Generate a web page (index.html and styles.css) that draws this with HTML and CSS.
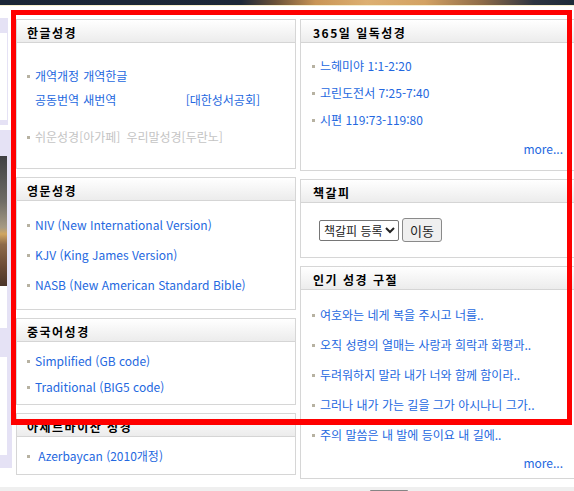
FILE: index.html
```html
<!DOCTYPE html>
<html lang="ko">
<head>
    <meta charset="UTF-8">
    <meta name="viewport" content="width=device-width, initial-scale=1.0">
    <title>성경 읽기</title>
    <link rel="stylesheet" href="styles.css">
</head>
<body>
    <div class="topbar"></div>

    <div class="layout">
        <!-- left menu, only its edge is on screen -->
        <div class="side">
            <div class="side-box side-top"><div class="side-inner"></div></div>
            <div class="side-box side-main">
                <div class="side-photo"></div>
                <div class="side-inner side-short"></div>
                <div class="side-inner side-long"></div>
            </div>
        </div>

        <div class="content">
            <div class="col">
                <div class="panel">
                    <h2 class="panel-title">한글성경</h2>
                    <ul class="list list-korean">
                        <li>
                            <div>
                                <div class="line"><a href="#">개역개정</a><a href="#">개역한글</a></div>
                                <div class="line"><a href="#">공동번역</a><a href="#">새번역</a><a href="#" class="publisher">[대한성서공회]</a></div>
                            </div>
                        </li>
                        <li class="muted">
                            <div class="line"><a href="#">쉬운성경[아가페]</a><a href="#">우리말성경[두란노]</a></div>
                        </li>
                    </ul>
                </div>

                <div class="panel">
                    <h2 class="panel-title">영문성경</h2>
                    <ul class="list list-english">
                        <li><a href="#">NIV (New International Version)</a></li>
                        <li><a href="#">KJV (King James Version)</a></li>
                        <li><a href="#">NASB (New American Standard Bible)</a></li>
                    </ul>
                </div>

                <div class="panel">
                    <h2 class="panel-title">중국어성경</h2>
                    <ul class="list list-short">
                        <li><a href="#">Simplified (GB code)</a></li>
                        <li><a href="#">Traditional (BIG5 code)</a></li>
                    </ul>
                </div>

                <div class="panel">
                    <h2 class="panel-title">아제르바이잔 성경</h2>
                    <ul class="list list-short list-last">
                        <li><a href="#">&nbsp;Azerbaycan (2010개정)</a></li>
                    </ul>
                </div>
            </div>

            <div class="col col-right">
                <div class="panel">
                    <h2 class="panel-title">365일 일독성경</h2>
                    <ul class="list list-daily">
                        <li><a href="#">느헤미야 1:1-2:20</a></li>
                        <li><a href="#">고린도전서 7:25-7:40</a></li>
                        <li><a href="#">시편 119:73-119:80</a></li>
                    </ul>
                    <a href="#" class="more more-daily">more...</a>
                </div>

                <div class="panel">
                    <h2 class="panel-title">책갈피</h2>
                    <form class="bookmark" onsubmit="return false">
                        <select class="bookmark-select">
                            <option>책갈피 등록</option>
                        </select>
                        <button type="submit" class="bookmark-go">이동</button>
                    </form>
                </div>

                <div class="panel">
                    <h2 class="panel-title">인기 성경 구절</h2>
                    <ul class="list list-verses">
                        <li><a href="#">여호와는 네게 복을 주시고 너를..</a></li>
                        <li><a href="#">오직 성령의 열매는 사랑과 희락과 화평과..</a></li>
                        <li><a href="#">두려워하지 말라 내가 너와 함께 함이라..</a></li>
                        <li><a href="#">그러나 내가 가는 길을 그가 아시나니 그가..</a></li>
                        <li><a href="#">주의 말씀은 내 발에 등이요 내 길에..</a></li>
                    </ul>
                    <a href="#" class="more more-verses">more...</a>
                </div>
            </div>
        </div>
    </div>

    <div class="footer"><div class="footer-thumb"></div></div>

    <div class="highlight"></div>
</body>
</html>
```

FILE: styles.css
```css
* {
    box-sizing: border-box;
    margin: 0;
    padding: 0;
}

body {
    background: #fff;
    font-family: "Noto Sans CJK KR", sans-serif;
    overflow: hidden;
    position: relative;
}

a {
    color: #2468e0;
    text-decoration: none;
}

.topbar {
    height: 6px;
    border-bottom: 1px solid #f5efcc;
    background: linear-gradient(to right, #1b2636 0%, #1d2838 42%, #6b5238 48%, #c99556 55%, #ddb072 64%, #d3a263 74%, #8d6b48 84%, #2d3440 93%, #1e2a39 100%);
}

.layout {
    display: flex;
    padding-top: 12px;
}

/* sidebar edge */
.side {
    width: 12px;
    flex: none;
}

.side-box {
    background: #e5e2f5;
}

.side-top {
    width: 8px;
    height: 107px;
    padding: 15px 1px 5px 0;
}

.side-main {
    width: 12px;
    margin-top: 5px;
    padding: 26px 5px 13px 0;
}

.side-inner {
    background: #fff;
    height: 100%;
}

.side-photo {
    height: 130px;
    background: linear-gradient(to bottom, #3f4042 0%, #6f6c66 35%, #a69a83 55%, #d0a560 60%, #8e6a4a 68%, #6b4a35 85%, #4a3428 100%);
}

.side-short {
    height: 42px;
}

.side-long {
    height: 98px;
    margin-top: 29px;
}

/* two columns of boxes */
.content {
    display: flex;
    gap: 4px;
    margin-left: 4px;
    margin-top: 1px;
}

.col {
    width: 280px;
    flex: none;
}

.panel {
    border: 1px solid #d6d6d6;
    margin-bottom: 8px;
}

.panel-title {
    height: 23px;
    line-height: 25px;
    padding-left: 10px;
    border-bottom: 1px solid #d5d5d5;
    background: linear-gradient(to bottom, #ffffff, #ececec);
    color: #000;
    font-size: 12px;
    font-weight: bold;
    letter-spacing: 1.5px;
}

.col-right .panel-title {
    padding-left: 12px;
}

.list {
    list-style: none;
    padding-left: 10px;
    --lh: 26px;
}

.col-right .list {
    padding-left: 11px;
}

.list li {
    display: flex;
    align-items: flex-start;
    line-height: var(--lh);
    font-size: 12px;
}

.list li::before {
    content: "";
    flex: none;
    width: 3px;
    height: 3px;
    margin: calc(var(--lh) / 2 - 1px) 5px 0 0;
    background: #b7b2a2;
}

.list-korean {
    --lh: 24px;
    padding-top: 21px;
    padding-bottom: 19px;
}

.list-korean .line {
    display: flex;
    width: 229px;
}

.list-korean .line a {
    margin-right: 4px;
}

.list-korean .publisher {
    margin-left: auto;
    margin-right: 0;
}

.list-korean .muted {
    margin-top: 13px;
}

.list-korean .muted .line a {
    color: #c4c4c4;
    margin-right: 6px;
}

.list-english {
    --lh: 30px;
    padding-top: 9px;
    padding-bottom: 9px;
}

.list-short {
    padding-top: 6px;
    padding-bottom: 4px;
}

.list-last {
    padding-bottom: 5px;
}

.list-daily {
    --lh: 27px;
    padding-top: 9px;
}

.list-verses {
    --lh: 30px;
    padding-top: 10px;
}

.more {
    display: block;
    text-align: right;
    padding-right: 16px;
    line-height: 20px;
    font-size: 12px;
}

.more-daily {
    margin-top: 6px;
    margin-bottom: 11px;
}

.more-verses {
    margin-top: 3px;
    margin-bottom: 5px;
}

.bookmark {
    display: flex;
    align-items: center;
    gap: 3px;
    padding: 15px 18px;
}

.bookmark-select {
    width: 80px;
    height: 21px;
    font-family: "Noto Sans CJK KR", sans-serif;
    font-size: 12px;
    color: #222;
    border: 1px solid #767676;
    border-radius: 2px;
    background: #fff;
}

.bookmark-go {
    width: 40px;
    height: 24px;
    font-family: "Noto Sans CJK KR", sans-serif;
    font-size: 13px;
    color: #222;
    border: 1px solid #8a8a8a;
    border-radius: 3px;
    background: #efefef;
}

.footer {
    height: 10px;
    background: #efefef;
    padding-top: 3px;
}

.footer-thumb {
    width: 38px;
    height: 3px;
    margin-left: 370px;
    background: #858585;
    border-radius: 1px;
}

/* red marker drawn over the content area */
.highlight {
    position: absolute;
    left: 11px;
    top: 10px;
    width: 561px;
    height: 415px;
    border: 5px solid #ff0000;
    border-bottom-width: 6px;
    pointer-events: none;
}
```
